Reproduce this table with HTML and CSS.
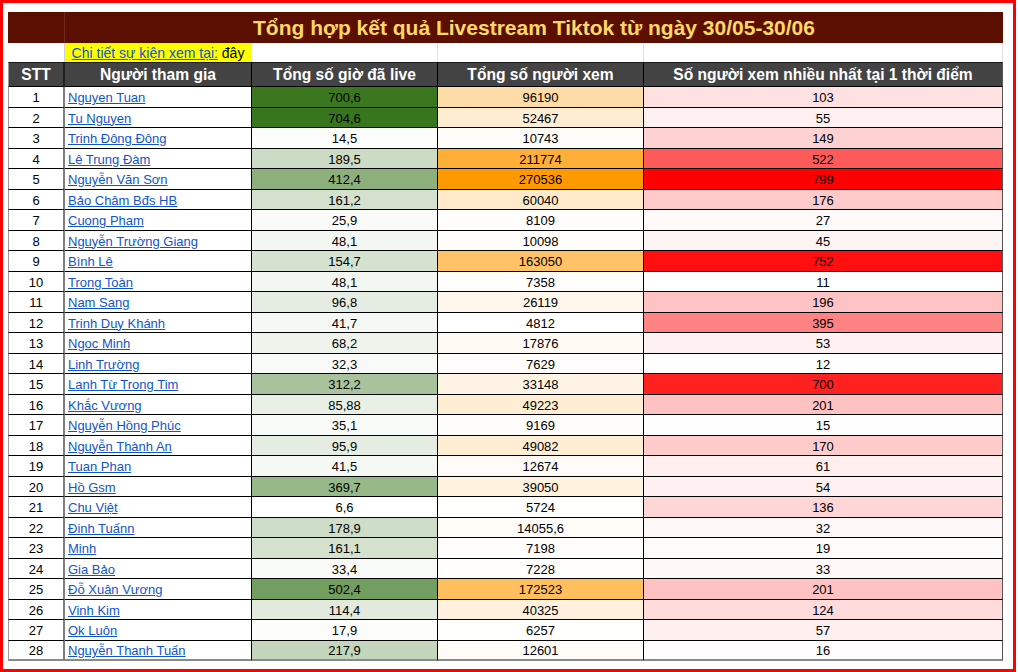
FILE: index.html
```html
<!DOCTYPE html>
<html lang="vi">
<head>
<meta charset="utf-8">
<title>Tổng hợp kết quả Livestream Tiktok</title>
<link rel="stylesheet" href="styles.css">
</head>
<body>
<div class="frame">
  <div class="sheet">
    <div class="c title-a"></div>
    <div class="c title">Tổng hợp kết quả Livestream Tiktok từ ngày 30/05-30/06</div>

    <div class="c blank first"></div>
    <div class="c note"><a class="lnk" href="#">Chi tiết sự kiện xem tại: </a><span class="here">&nbsp;đây</span></div>
    <div class="c blank"></div>
    <div class="c blank"></div>
    <div class="c blank last"></div>

    <div class="c hd stt">STT</div>
    <div class="c hd">Người tham gia</div>
    <div class="c hd">Tổng số giờ đã live</div>
    <div class="c hd">Tổng số người xem</div>
    <div class="c hd last">Số người xem nhiều nhất tại 1 thời điểm</div>

    <div class="c stt">1</div><div class="c name"><a class="lnk" href="#">Nguyen Tuan</a></div><div class="c num h" style="--p:0.994">700,6</div><div class="c num v" style="--p:0.344">96190</div><div class="c num m last" style="--p:0.117">103</div>
    <div class="c stt">2</div><div class="c name"><a class="lnk" href="#">Tu Nguyen</a></div><div class="c num h" style="--p:1">704,6</div><div class="c num v" style="--p:0.179">52467</div><div class="c num m last" style="--p:0.056">55</div>
    <div class="c stt">3</div><div class="c name"><a class="lnk" href="#">Trinh Đông Đông</a></div><div class="c num h" style="--p:0.011">14,5</div><div class="c num v" style="--p:0.022">10743</div><div class="c num m last" style="--p:0.175">149</div>
    <div class="c stt">4</div><div class="c name"><a class="lnk" href="#">Lê Trung Đàm</a></div><div class="c num h" style="--p:0.262">189,5</div><div class="c num v" style="--p:0.779">211774</div><div class="c num m last" style="--p:0.648">522</div>
    <div class="c stt">5</div><div class="c name"><a class="lnk" href="#">Nguyễn Văn Sơn</a></div><div class="c num h" style="--p:0.581">412,4</div><div class="c num v" style="--p:1">270536</div><div class="c num m last" style="--p:1">799</div>
    <div class="c stt">6</div><div class="c name"><a class="lnk" href="#">Bảo Châm Bđs HB</a></div><div class="c num h" style="--p:0.221">161,2</div><div class="c num v" style="--p:0.208">60040</div><div class="c num m last" style="--p:0.209">176</div>
    <div class="c stt">7</div><div class="c name"><a class="lnk" href="#">Cuong Pham</a></div><div class="c num h" style="--p:0.028">25,9</div><div class="c num v" style="--p:0.012">8109</div><div class="c num m last" style="--p:0.020">27</div>
    <div class="c stt">8</div><div class="c name"><a class="lnk" href="#">Nguyễn Trường Giang</a></div><div class="c num h" style="--p:0.059">48,1</div><div class="c num v" style="--p:0.020">10098</div><div class="c num m last" style="--p:0.043">45</div>
    <div class="c stt">9</div><div class="c name"><a class="lnk" href="#">Bình Lê</a></div><div class="c num h" style="--p:0.212">154,7</div><div class="c num v" style="--p:0.595">163050</div><div class="c num m last" style="--p:0.940">752</div>
    <div class="c stt">10</div><div class="c name"><a class="lnk" href="#">Trong Toàn</a></div><div class="c num h" style="--p:0.059">48,1</div><div class="c num v" style="--p:0.010">7358</div><div class="c num m last" style="--p:0">11</div>
    <div class="c stt">11</div><div class="c name"><a class="lnk" href="#">Nam Sang</a></div><div class="c num h" style="--p:0.129">96,8</div><div class="c num v" style="--p:0.080">26119</div><div class="c num m last" style="--p:0.235">196</div>
    <div class="c stt">12</div><div class="c name"><a class="lnk" href="#">Trinh Duy Khánh</a></div><div class="c num h" style="--p:0.050">41,7</div><div class="c num v" style="--p:0">4812</div><div class="c num m last" style="--p:0.487">395</div>
    <div class="c stt">13</div><div class="c name"><a class="lnk" href="#">Ngoc Minh</a></div><div class="c num h" style="--p:0.088">68,2</div><div class="c num v" style="--p:0.049">17876</div><div class="c num m last" style="--p:0.053">53</div>
    <div class="c stt">14</div><div class="c name"><a class="lnk" href="#">Linh Trường</a></div><div class="c num h" style="--p:0.037">32,3</div><div class="c num v" style="--p:0.011">7629</div><div class="c num m last" style="--p:0.001">12</div>
    <div class="c stt">15</div><div class="c name"><a class="lnk" href="#">Lanh Từ Trong Tim</a></div><div class="c num h" style="--p:0.438">312,2</div><div class="c num v" style="--p:0.107">33148</div><div class="c num m last" style="--p:0.874">700</div>
    <div class="c stt">16</div><div class="c name"><a class="lnk" href="#">Khắc Vương</a></div><div class="c num h" style="--p:0.114">85,88</div><div class="c num v" style="--p:0.167">49223</div><div class="c num m last" style="--p:0.241">201</div>
    <div class="c stt">17</div><div class="c name"><a class="lnk" href="#">Nguyễn Hồng Phúc</a></div><div class="c num h" style="--p:0.041">35,1</div><div class="c num v" style="--p:0.016">9169</div><div class="c num m last" style="--p:0.005">15</div>
    <div class="c stt">18</div><div class="c name"><a class="lnk" href="#">Nguyễn Thành An</a></div><div class="c num h" style="--p:0.128">95,9</div><div class="c num v" style="--p:0.167">49082</div><div class="c num m last" style="--p:0.202">170</div>
    <div class="c stt">19</div><div class="c name"><a class="lnk" href="#">Tuan Phan</a></div><div class="c num h" style="--p:0.050">41,5</div><div class="c num v" style="--p:0.030">12674</div><div class="c num m last" style="--p:0.063">61</div>
    <div class="c stt">20</div><div class="c name"><a class="lnk" href="#">Hồ Gsm</a></div><div class="c num h" style="--p:0.520">369,7</div><div class="c num v" style="--p:0.129">39050</div><div class="c num m last" style="--p:0.055">54</div>
    <div class="c stt">21</div><div class="c name"><a class="lnk" href="#">Chu Việt</a></div><div class="c num h" style="--p:0">6,6</div><div class="c num v" style="--p:0.003">5724</div><div class="c num m last" style="--p:0.159">136</div>
    <div class="c stt">22</div><div class="c name"><a class="lnk" href="#">Đinh Tuấnn</a></div><div class="c num h" style="--p:0.247">178,9</div><div class="c num v" style="--p:0.035">14055,6</div><div class="c num m last" style="--p:0.027">32</div>
    <div class="c stt">23</div><div class="c name"><a class="lnk" href="#">Minh</a></div><div class="c num h" style="--p:0.221">161,1</div><div class="c num v" style="--p:0.009">7198</div><div class="c num m last" style="--p:0.010">19</div>
    <div class="c stt">24</div><div class="c name"><a class="lnk" href="#">Gia Bảo</a></div><div class="c num h" style="--p:0.038">33,4</div><div class="c num v" style="--p:0.009">7228</div><div class="c num m last" style="--p:0.028">33</div>
    <div class="c stt">25</div><div class="c name"><a class="lnk" href="#">Đỗ Xuân Vương</a></div><div class="c num h" style="--p:0.710">502,4</div><div class="c num v" style="--p:0.631">172523</div><div class="c num m last" style="--p:0.241">201</div>
    <div class="c stt">26</div><div class="c name"><a class="lnk" href="#">Vinh Kim</a></div><div class="c num h" style="--p:0.154">114,4</div><div class="c num v" style="--p:0.134">40325</div><div class="c num m last" style="--p:0.143">124</div>
    <div class="c stt">27</div><div class="c name"><a class="lnk" href="#">Ok Luôn</a></div><div class="c num h" style="--p:0.016">17,9</div><div class="c num v" style="--p:0.005">6257</div><div class="c num m last" style="--p:0.058">57</div>
    <div class="c stt end">28</div><div class="c name end"><a class="lnk" href="#">Nguyễn Thanh Tuấn</a></div><div class="c num h end" style="--p:0.303">217,9</div><div class="c num v end" style="--p:0.029">12601</div><div class="c num m last end" style="--p:0.006">16</div>
  </div>
</div>
</body>
</html>
```

FILE: styles.css
```css
html, body {
  margin: 0;
  padding: 0;
  background: #ffffff;
}

.frame {
  box-sizing: border-box;
  width: 1016px;
  height: 672px;
  border: 3px solid #ff0000;
  padding: 9px 0 0 5px;
  overflow: hidden;
}

.sheet {
  display: grid;
  grid-template-columns: 57px 187px 186px 206px 359px;
  grid-template-rows: 31px 19px 25px repeat(14, 21px 20px);
  width: 995px;
  background: #ffffff;
  font-family: "Liberation Sans", Arial, sans-serif;
  font-size: 13px;
  color: #000000;
}

.c {
  box-sizing: border-box;
  display: flex;
  align-items: center;
  justify-content: center;
  white-space: nowrap;
  overflow: hidden;
  border-right: 1px solid #000000;
  border-bottom: 1px solid #000000;
}

.title-a {
  background: #5b0f00;
  border-right: 1px solid #6e2a1c;
  border-bottom: none;
}

.title {
  grid-column: 2 / 6;
  background: #5b0f00;
  color: #ffd966;
  font-weight: bold;
  font-size: 21px;
  border: none;
  padding-top: 1px;
}

.blank {
  border-right: 1px solid #e2e2e2;
  border-bottom: none;
}

.blank.first {
  border-right: 1px solid #d0d0d0;
}

.blank.last {
  border-right: 1px solid #e2e2e2;
}

.note {
  background: #ffff00;
  font-size: 14px;
  border-right: 1px solid #e2e2e2;
  border-bottom: none;
}

.note .here {
  color: #000000;
}

.lnk {
  color: #1155cc;
  text-decoration: underline;
}

.hd {
  background: #434343;
  color: #ffffff;
  font-weight: bold;
  font-size: 15.6px;
  border-top: 1px solid #1a1a1a;
  border-bottom: 1px solid #000000;
  border-right: 1px solid #000000;
}

.stt {
  border-left: 1px solid #9a9a9a;
  border-right: 2px solid #7f7f7f;
}

.hd.stt {
  border-right: 2px solid #222222;
}

.name {
  justify-content: flex-start;
  padding-left: 3px;
}

.num {
  padding-top: 1px;
}

.stt, .name {
  padding-top: 1px;
}

.hd {
  padding-top: 0;
}

.last {
  border-right: 1px solid #555555;
}

.h {
  background-color: rgb(56 118 29 / var(--p));
}

.v {
  background-color: rgb(255 153 0 / var(--p));
}

.m {
  background-color: rgb(255 0 0 / var(--p));
}

.end {
  border-bottom: 2px solid #8a8a8a;
}
```
